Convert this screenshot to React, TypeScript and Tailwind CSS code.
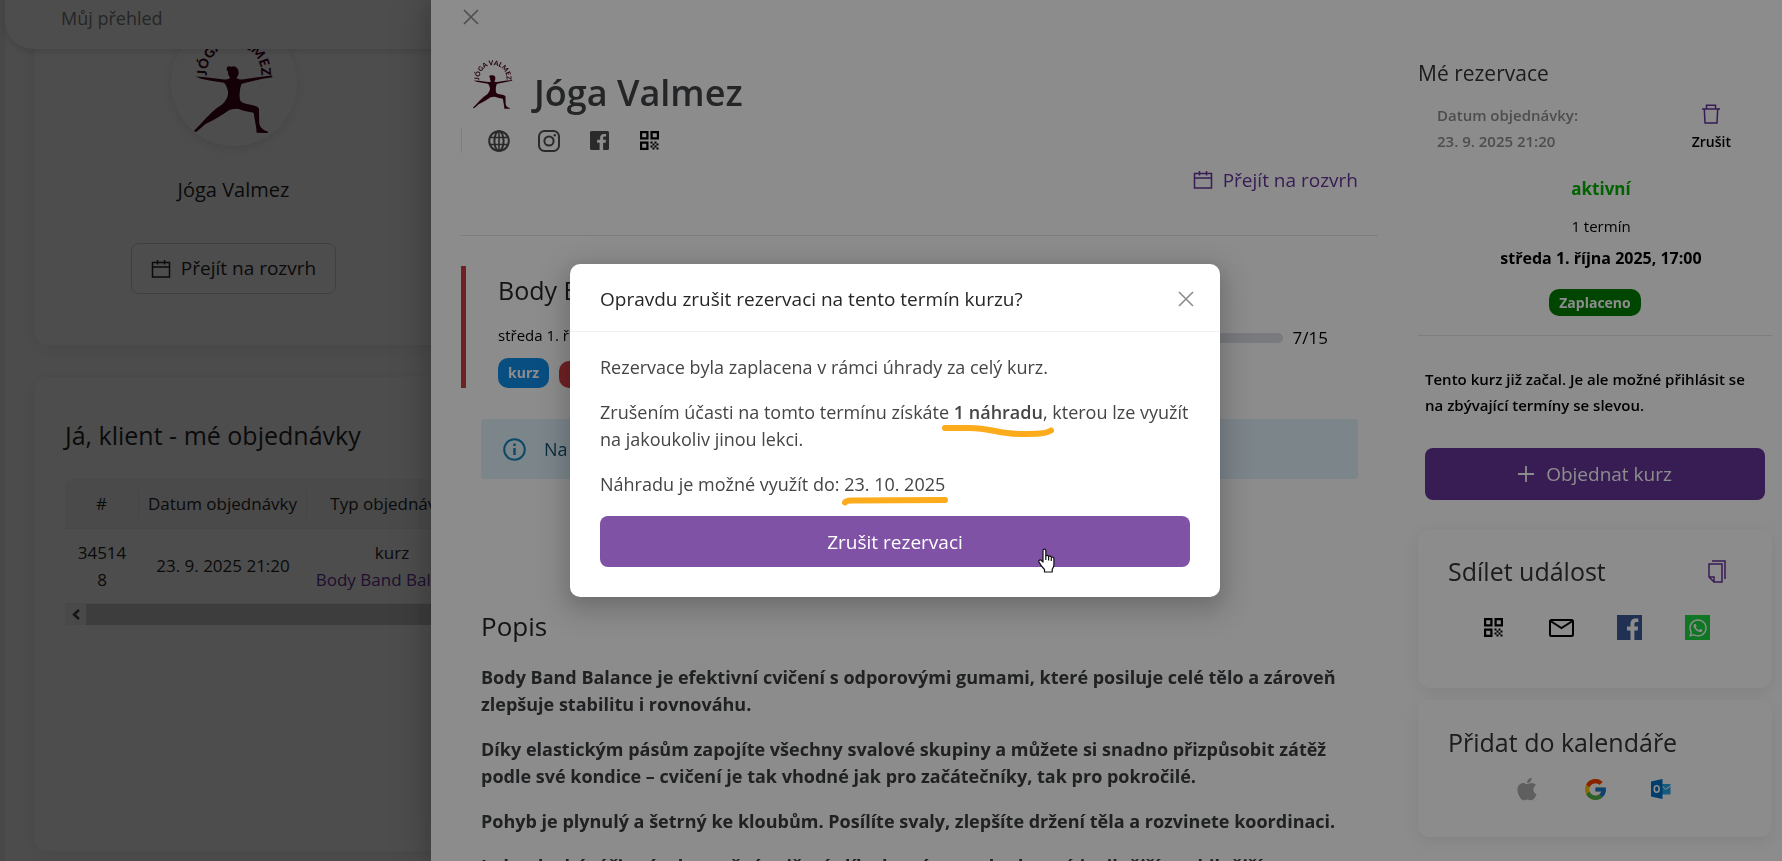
import type { ReactNode } from 'react';
import { FcGoogle } from 'react-icons/fc';
import { FaApple, FaWhatsapp } from 'react-icons/fa';

const YogaLogo = ({ className, id }: { className?: string; id: string }) => (
  <svg className={className} viewBox="578 95 252 310" fill="#42001a" role="img" aria-label="Jóga Valmez">
    <path id={id} d="M622 249v-30a82 82 0 0 1 164 0v30" fill="none" />
    <text fontFamily="Lato, sans-serif" fontWeight="900" fontSize="40" textAnchor="middle">
      <textPath href={`#${id}`} startOffset="50%">JÓGA VALMEZ</textPath>
    </text>
    <ellipse cx="702" cy="217" rx="16" ry="19" />
    <circle cx="690" cy="206" r="8" />
    <path d="M588 229L618 231L675 238Q690 240 694 230L710 230Q714 240 728 238L775 231L818 226L820 231L790 236L745 246Q728 250 726 252Q718 275 722 300Q726 310 750 313Q775 317 779 325L780 370Q782 388 806 395L806 399L772 398L771 385L763 338Q740 336 715 326Q700 326 690 330Q650 358 618 372L600 388L590 396L583 393L600 376Q640 330 670 312Q688 292 686 275Q682 255 674 248L630 241L605 236Z" />
  </svg>
);

const CalendarIcon = () => (
  <svg width="20" height="20" viewBox="0 0 20 20" fill="none" stroke="currentColor" strokeWidth="1.5"><path d="M1.5 3.5h17v14.5h-17zM1.5 8h17M6.5 1v4.5M13.5 1v4.5" /></svg>
);

const CloseIcon = () => (
  <svg width="16" height="16" viewBox="0 0 16 16" fill="none" stroke="currentColor" strokeWidth="1.6"><path d="M1 1l14 14M15 1L1 15" /></svg>
);

const QrIcon = () => (
  <svg width="19" height="19" viewBox="0 0 19 19" fill="none" stroke="#000" strokeWidth="2.2">
    <path d="M1.1 1.1h6.3v6.3H1.1zM11.6 1.1h6.3v6.3h-6.3zM1.1 11.6h6.3v6.3H1.1z" />
    <path d="M10.5 10.5h2v2h-2zM14.5 10.5h2v2h-2zM12.5 12.5h2v2h-2zM16.5 12.5h2v2h-2zM10.5 14.5h2v2h-2zM14.5 14.5h2v2h-2zM12.5 16.5h2v2h-2zM16.5 16.5h2v2h-2z" fill="#000" stroke="none" />
  </svg>
);

const GlobeIcon = () => (
  <svg width="22" height="22" viewBox="0 0 22 22" fill="none" stroke="currentColor" strokeWidth="2"><circle cx="11" cy="11" r="9.8" /><ellipse cx="11" cy="11" rx="4.6" ry="9.8" /><path d="M11 1v20M2 7.5h18M2 14.5h18" strokeWidth="1.6" /></svg>
);

const InstagramIcon = () => (
  <svg width="22" height="22" viewBox="0 0 22 22" fill="none" stroke="currentColor" strokeWidth="2"><rect x="1" y="1" width="20" height="20" rx="5.5" /><circle cx="11" cy="11" r="4.6" /><circle cx="16.8" cy="5.2" r="1.2" fill="currentColor" stroke="none" /></svg>
);

const FacebookIcon = () => (
  <svg width="19" height="19" viewBox="0 0 19 19" fill="currentColor"><path d="M1.500 0h16A1.500 1.500 0 0 1 19 1.500v16a1.500 1.500 0 0 1-1.500 1.500h-4.400v-7.300h2.500l.4-2.900h-2.900V7c0-.9.300-1.400 1.500-1.400h1.500V3c-.3 0-1.200-.1-2.200-.1-2.200 0-3.800 1.300-3.800 3.800v2.100H7.100v2.900h2.500V19H1.500A1.500 1.500 0 0 1 0 17.500v-16A1.500 1.500 0 0 1 1.500 0z" /></svg>
);

const OutlookIcon = () => (
  <svg width="20" height="20" viewBox="0 0 20 20">
    <path d="M11 5h8.5v10.5H11z" fill="#28a8ea" />
    <path d="M11 7l3.6 3.2L19.5 7" fill="none" stroke="#fff" strokeWidth="1" />
    <path d="M0 2.4L11.5 0v20L0 17.6z" fill="#0072c6" />
    <ellipse cx="5.7" cy="10" rx="2.5" ry="3.2" fill="none" stroke="#fff" strokeWidth="1.6" />
  </svg>
);

const SideCard = ({ title, action, className, children }: { title: string; action?: ReactNode; className: string; children: ReactNode }) => (
  <section className={`rounded-xl bg-white pl-[30px] shadow-[0_4px_16px_rgba(0,0,0,0.08)] ${className}`}>
    <div className="flex items-center justify-between pr-[46px]">
      <h3 className="text-[25px] leading-9 text-[#333]">{title}</h3>
      {action}
    </div>
    {children}
  </section>
);

const Dashboard = () => (
  <div className="min-h-screen overflow-hidden border-l-[5px] border-[#ededed] bg-[#fcfcfc] text-[#262626]">
    <header className="absolute left-[5px] right-0 top-0 z-10 h-[49px] rounded-bl-[28px] bg-white pl-14 pt-1 text-lg leading-7 text-[#7d7d7d] shadow-[0_2px_8px_rgba(0,0,0,0.15)]">
      Můj přehled
    </header>
    <main className="flex flex-col gap-8 pl-[30px]">
      <section className="rounded-xl bg-white pb-[51px] pt-5 shadow-[0_4px_20px_rgba(0,0,0,0.08)]">
        <div className="flex w-[397px] flex-col items-center">
          <div className="flex h-[126px] w-[126px] items-center justify-center rounded-full shadow-[0_2px_12px_rgba(0,0,0,0.12)]">
            <YogaLogo id="arc-large" className="h-[103px] w-[84px]" />
          </div>
          <h2 className="mt-[30px] text-xl leading-7">Jóga Valmez</h2>
          <button className="mt-[39px] flex h-[51px] items-center gap-2.5 rounded-lg border border-[#d0d0d0] px-[19px] text-[19px]">
            <CalendarIcon />
            Přejít na rozvrh
          </button>
        </div>
      </section>
      <section className="h-[474px] rounded-xl bg-white pl-[30px] pt-[38px] shadow-[0_4px_20px_rgba(0,0,0,0.08)]">
        <h2 className="text-[25px] leading-10">Já, klient - mé objednávky</h2>
        <table className="mt-6 table-fixed text-center text-[17px] leading-[27px]">
          <colgroup>
            <col className="w-[74px]" />
            <col className="w-[168px]" />
            <col className="w-[170px]" />
          </colgroup>
          <thead>
            <tr className="h-[49px] border-b border-[#eee] bg-[#f5f5f5]">
              <th className="rounded-tl-lg font-normal"><div className="border-r border-[#e4e4e4]">#</div></th>
              <th className="font-normal"><div className="border-r border-[#e4e4e4]">Datum objednávky</div></th>
              <th className="font-normal">Typ objednávky</th>
            </tr>
          </thead>
          <tbody>
            <tr className="h-[75px] border-b border-[#eee]">
              <td className="break-all px-3">345148</td>
              <td>23. 9. 2025 21:20</td>
              <td>kurz<br /><a href="#kurz" className="whitespace-nowrap text-[#639]">Body Band Balance</a></td>
            </tr>
          </tbody>
        </table>
        <div className="flex h-[21px] bg-[#c9c9c9]">
          <div className="flex w-[21px] items-center justify-center bg-[#f0f0f0]">
            <svg width="8" height="11" viewBox="0 0 8 11" fill="none" stroke="#444" strokeWidth="2.4"><path d="M7 1L2 5.500L7 10" /></svg>
          </div>
        </div>
      </section>
    </main>
  </div>
);

const CourseDetail = () => (
  <div className="min-w-0 flex-1">
    <div className="flex items-center gap-5 pt-[25px]">
      <YogaLogo id="arc-small" className="ml-[11px] h-[52px] w-[42px]" />
      <h1 className="pt-[18px] text-4xl font-semibold leading-[34px] text-[#424446]">Jóga Valmez</h1>
    </div>
    <div className="mt-[18px] flex h-[25px] items-center gap-[26px] border-l border-[#e4e4e4] pl-[25px] text-[#4e4e4e]">
      <a href="#web" aria-label="Web" className="flex w-6 justify-center"><GlobeIcon /></a>
      <a href="#instagram" aria-label="Instagram" className="flex w-6 justify-center"><InstagramIcon /></a>
      <a href="#facebook" aria-label="Facebook" className="flex w-6 justify-center"><FacebookIcon /></a>
      <a href="#qr" aria-label="QR kód" className="flex w-6 justify-center"><QrIcon /></a>
    </div>
    <div className="flex justify-end border-b border-[#e4e4e4] pb-[41px] pr-5 pt-[13px]">
      <a href="#rozvrh" className="flex items-center gap-2.5 text-[19px] leading-7 text-[#639]"><CalendarIcon />Přejít na rozvrh</a>
    </div>

    <div className="mt-[30px] flex h-[122px] items-start border-l-[5px] border-[#cd3d42] pl-8 pr-[50px]">
      <div className="flex-1">
        <h2 className="pt-1.5 text-[25px] leading-9 text-[#262626]">Body Band Balance</h2>
        <p className="mt-[15px] text-[15px] leading-6 text-black">středa 1. října 2025, 17:00</p>
        <div className="mt-[11px] flex items-end gap-2.5 text-sm font-bold text-white">
          <span className="rounded-[10px] bg-[#108ee9] px-2.5 leading-[30px]">kurz</span>
          <span className="rounded-[10px] bg-[#cd3d42] px-2.5 leading-[27px]">probíhá</span>
        </div>
      </div>
      <div className="flex w-[300px] items-center gap-2.5 pt-[60px] text-[17px] leading-6 text-black">
        <div className="h-2.5 flex-1 rounded-full bg-[#dcdee6]" />
        7/15
      </div>
    </div>

    <div className="mx-5 mt-[31px] flex h-[60px] items-center gap-[18px] rounded bg-[#e2f3fc] pl-[22px] text-lg text-[#14506e]">
      <svg width="23" height="23" viewBox="0 0 23 23" fill="none" stroke="#1586bc" strokeWidth="2"><circle cx="11.500" cy="11.500" r="10.300" /><path d="M11.500 10v7M11.500 5.500v2.500" strokeWidth="2.400" /></svg>
      Na tento kurz jste přihlášeni.
    </div>

    <div className="px-5 pt-[127px] text-[#3a3c3e]">
      <h2 className="text-[26px] leading-10 text-[#262626]">Popis</h2>
      <div className="mt-[18px] flex flex-col gap-[18px] text-lg font-bold leading-[27px]">
        <p>Body Band Balance je efektivní cvičení s odporovými gumami, které posiluje celé tělo a zároveň zlepšuje stabilitu i rovnováhu.</p>
        <p>Díky elastickým pásům zapojíte všechny svalové skupiny a můžete si snadno přizpůsobit zátěž podle své kondice – cvičení je tak vhodné jak pro začátečníky, tak pro pokročilé.</p>
        <p>Pohyb je plynulý a šetrný ke kloubům. Posílíte svaly, zlepšíte držení těla a rozvinete koordinaci.</p>
        <p>Jednoduché, účinné a bezpečné cvičení, díky kterému se budete cítit silnější, stabilnější</p>
      </div>
    </div>
  </div>
);

const ReservationPanel = () => (
  <aside className="w-[354px] shrink-0">
    <h2 className="pt-6 text-[21px] leading-8 text-[#333]">Mé rezervace</h2>
    <div className="flex justify-between pl-[19px] pr-10 pt-[13px] text-[15px] font-semibold leading-[26px]">
      <p className="text-[#8c8c8c]">Datum objednávky:<br />23. 9. 2025 21:20</p>
      <button className="flex flex-col items-center gap-2 pr-px pt-0.5 text-sm text-black">
        <svg width="18" height="20" viewBox="0 0 18 20" fill="none" stroke="#639" strokeWidth="1.5"><path d="M0 5h18M4.500 5V1.200h9V5M2.300 5l.7 14h12l.7-14" /></svg>
        Zrušit
      </button>
    </div>
    <div className="flex flex-col items-center border-b border-[#e4e4e4] pb-[19px] pt-[21px] text-[15px] text-black">
      <p className="pl-3 text-[17px] font-bold leading-7 text-[#00b400]">aktivní</p>
      <p className="mt-[11px] pl-3 leading-6">1 termín</p>
      <p className="mt-2 pl-3 text-base font-bold leading-6">středa 1. října 2025, 17:00</p>
      <span className="mt-[19px] rounded-[10px] bg-[#008000] px-2.5 text-sm font-bold leading-[27px] text-white">Zaplaceno</span>
    </div>
    <div className="px-[7px]">
      <p className="pt-[30px] text-[15px] font-semibold leading-[26px] text-black">Tento kurz již začal. Je ale možné přihlásit se na zbývající termíny se slevou.</p>
      <button className="mt-[30px] flex h-[52px] w-full items-center justify-center gap-3 rounded-lg bg-[#639] text-[19px] text-white">
        <svg width="16" height="16" viewBox="0 0 16 16" stroke="currentColor" strokeWidth="1.800"><path d="M8 0v16M0 8h16" /></svg>
        Objednat kurz
      </button>
    </div>
    <SideCard
      title="Sdílet událost"
      className="mt-[29px] h-[159px] pt-6"
      action={
        <button aria-label="Kopírovat odkaz">
          <svg width="18" height="23" viewBox="0 0 18 23" fill="none" stroke="#639" strokeWidth="1.500"><path d="M4 1h13v18M1 4h13v18H6l-5-5zM1 17h5v5" /></svg>
        </button>
      }
    >
      <div className="mt-[26px] flex items-center gap-[43px] pl-[33px]">
        <a href="#share-qr" aria-label="QR kód" className="flex w-[25px] justify-center"><QrIcon /></a>
        <a href="#share-mail" aria-label="E-mail"><svg width="25" height="18" viewBox="0 0 25 18" fill="none" stroke="#000" strokeWidth="2"><rect x="1" y="1" width="23" height="16" rx="1.500" /><path d="M1.500 2l11 7 11-7" /></svg></a>
        <a href="#share-fb" aria-label="Facebook"><svg width="25" height="25" viewBox="0 0 25 25"><path fill="#3b5998" d="M0 0h25v25H0z" /><path fill="#fff" d="M13.500 25v-9.600H10v-3.800h3.500V8.700C13.500 5.200 15.600 3.500 18.700 3.500c1.300 0 2.300.1 2.600.1v3.500h-1.900c-1.700 0-2 .8-2 2v2.500h3.700l-.5 3.800h-3.200V25z" /></svg></a>
        <a href="#share-wa" aria-label="WhatsApp" className="flex h-[25px] w-[25px] items-center justify-center bg-[#1dd741] text-white"><FaWhatsapp size={20} /></a>
      </div>
    </SideCard>
    <SideCard title="Přidat do kalendáře" className="mt-3 h-[137px] pt-6">
      <div className="mt-4 flex items-center gap-[43px] pl-[66px]">
        <a href="#apple" aria-label="Apple kalendář" className="text-[#aeaeae]"><FaApple size={26} /></a>
        <a href="#google" aria-label="Google kalendář"><FcGoogle size={25} /></a>
        <a href="#outlook" aria-label="Outlook kalendář"><OutlookIcon /></a>
      </div>
    </SideCard>
  </aside>
);

const CancelModal = () => (
  <div role="dialog" aria-modal="true" className="relative w-[650px] rounded-[10px] bg-white shadow-[0_6px_16px_rgba(0,0,0,0.08),0_9px_28px_8px_rgba(0,0,0,0.15)]">
    <div className="flex h-[68px] items-center justify-between border-b border-[#f0f0f0] px-[30px] pt-0.5">
      <h2 className="text-[19px] leading-7 text-[#262626]">Opravdu zrušit rezervaci na tento termín kurzu?</h2>
      <button aria-label="Zavřít" className="mr-[-4px] text-[#8c8c8c]"><CloseIcon /></button>
    </div>
    <div className="px-[30px] pb-[30px] pt-[22px] text-lg leading-[27px] text-[#454545]">
      <p>Rezervace byla zaplacena v rámci úhrady za celý kurz.</p>
      <p className="-mr-5 mt-[18px]">
        Zrušením účasti na tomto termínu získáte{' '}
        <span className="relative font-semibold">
          1 náhradu
          <svg className="absolute -left-3 top-[25px]" width="112" height="12" viewBox="0 0 112 12" fill="none" stroke="#fcab1c" strokeWidth="6" strokeLinecap="round"><path d="M3 3h24c22 0 30 6 52 6 15 0 24 0 30-3.500" /></svg>
        </span>
        , kterou lze využít<br />na jakoukoliv jinou lekci.
      </p>
      <p className="mt-[18px]">
        Náhradu je možné využít do:{' '}
        <span className="relative">
          23. 10. 2025
          <svg className="absolute -left-0.5 top-[25px]" width="106" height="9" viewBox="0 0 106 9" fill="none" stroke="#fcab1c" strokeWidth="6" strokeLinecap="round"><path d="M3 5.500Q4 3 12 3.500L103 3" /></svg>
        </span>
      </p>
      <button className="mt-[18px] block h-[51px] w-full cursor-pointer rounded-lg bg-[#7f52a6] pt-0.5 text-[19px] text-white">Zrušit rezervaci</button>
    </div>
    {/* kurzor */}
    <svg className="absolute bottom-6 right-[165px]" width="17" height="25" viewBox="0 0 17 25" fill="#fff" stroke="#111" strokeWidth="1.200" strokeLinejoin="round">
      <path d="M5 14V2.500C5 .6 7.800.6 7.800 2.500V8c.6-1 2.600-.8 2.800.6.800-.9 2.500-.6 2.700.8 1-.8 2.600-.2 2.600 1.400V17c0 2-1.300 3.300-1.700 4.500V24H6.500v-2.500C5 20 1.600 15.600.9 13.800.4 12.200 2.300 11.400 3.400 12.500z" />
      <path d="M7.800 8v4M10.600 9v3.500M13.300 10v3" />
    </svg>
  </div>
);

export default function App() {
  return (
    <div className="relative h-screen overflow-hidden font-['Open_Sans','Noto_Sans',sans-serif]">
      <Dashboard />
      <div className="fixed inset-0 z-20 bg-black/45 pl-[431px]">
        <div className="h-full overflow-hidden bg-white pl-[30px] pr-2.5 shadow-[-6px_0_16px_rgba(0,0,0,0.08),-9px_0_28px_rgba(0,0,0,0.10),-12px_0_48px_16px_rgba(0,0,0,0.06)]">
          <div className="flex h-[33px] items-center pl-0.5">
            <button aria-label="Zavřít" className="text-[#8c8c8c]"><CloseIcon /></button>
          </div>
          <div className="flex gap-10">
            <CourseDetail />
            <ReservationPanel />
          </div>
        </div>
      </div>
      <div className="fixed inset-0 z-30 flex items-center justify-center bg-black/45 pl-2">
        <CancelModal />
      </div>
    </div>
  );
}
